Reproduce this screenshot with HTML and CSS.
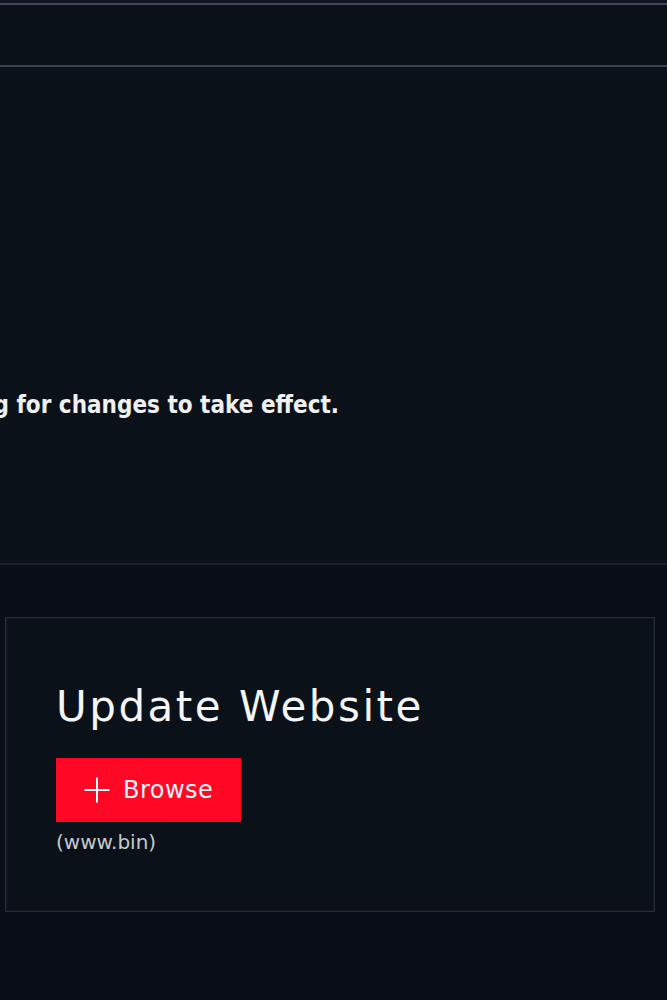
FILE: index.html
```html
<!DOCTYPE html>
<html lang="en">
<head>
<meta charset="utf-8">
<title>Update Website</title>
<link rel="stylesheet" href="styles.css">
</head>
<body>
  <div class="topstrip"></div>
  <header class="bar"></header>
  <section class="notice">
    <div class="notice-row">
      <p class="notice-text">Please wait while the device is rebooting for changes to take effect.</p>
    </div>
  </section>
  <main class="content">
    <div class="card">
      <h1 class="card-title">Update Website</h1>
      <button class="browse" type="button">
        <svg class="plus" width="26" height="26" viewBox="0 0 26 26" aria-hidden="true">
          <path d="M13 0.5V25.5M0.5 13H25.5" stroke="#ffffff" stroke-width="2" fill="none"/>
        </svg>
        <span>Browse</span>
      </button>
      <div class="hint">(www.bin)</div>
    </div>
  </main>
</body>
</html>
```
FILE: styles.css
```css
html, body {
  margin: 0;
  padding: 0;
}
body {
  background: #090d17;
  color: #f2f4f6;
  font-family: "DejaVu Sans", "Liberation Sans", sans-serif;
  overflow-x: hidden;
  width: 667px;
  min-height: 1000px;
}
.topstrip {
  height: 3px;
  background: #111520;
}
.bar {
  height: 60px;
  background: #0b1119;
  border-top: 2px solid #434a57;
  border-bottom: 2px solid #3c4350;
}
.notice {
  height: 498px;
  background: #0b1119;
  border-bottom: 2px solid #1a1f29;
  box-sizing: border-box;
  padding-top: 324px;
}
.notice-row {
  display: flex;
  justify-content: flex-end;
  width: 339px;
  white-space: nowrap;
}
.notice-text {
  flex-shrink: 0;
  margin: 0;
  font-family: "DejaVu Sans Condensed", "DejaVu Sans", sans-serif;
  font-stretch: condensed;
  font-weight: bold;
  font-size: 24px;
  line-height: 28px;
  color: #eef0f2;
}
.content {
  padding: 52px 12px 40px 5px;
}
.card {
  background: #0b1119;
  border: 1px solid #262c37;
  box-shadow: inset 0 0 0 1px #141922;
  padding: 65px 50px 0;
  height: 228px;
}
.card-title {
  margin: 0;
  font-weight: normal;
  font-size: 42px;
  line-height: 48px;
  letter-spacing: 2.5px;
  color: #f3f5f7;
}
.browse {
  display: inline-flex;
  align-items: center;
  gap: 13px;
  height: 64px;
  margin-top: 27px;
  padding: 0 28px 0 28px;
  border: none;
  background: #ff0826;
  color: #f4f4f4;
  font-family: "DejaVu Sans", sans-serif;
  font-size: 24px;
  letter-spacing: 0.5px;
  cursor: pointer;
}
.plus {
  display: block;
}
.hint {
  margin-top: 9px;
  font-size: 20px;
  line-height: 23px;
  color: #c5c9cf;
}
```
